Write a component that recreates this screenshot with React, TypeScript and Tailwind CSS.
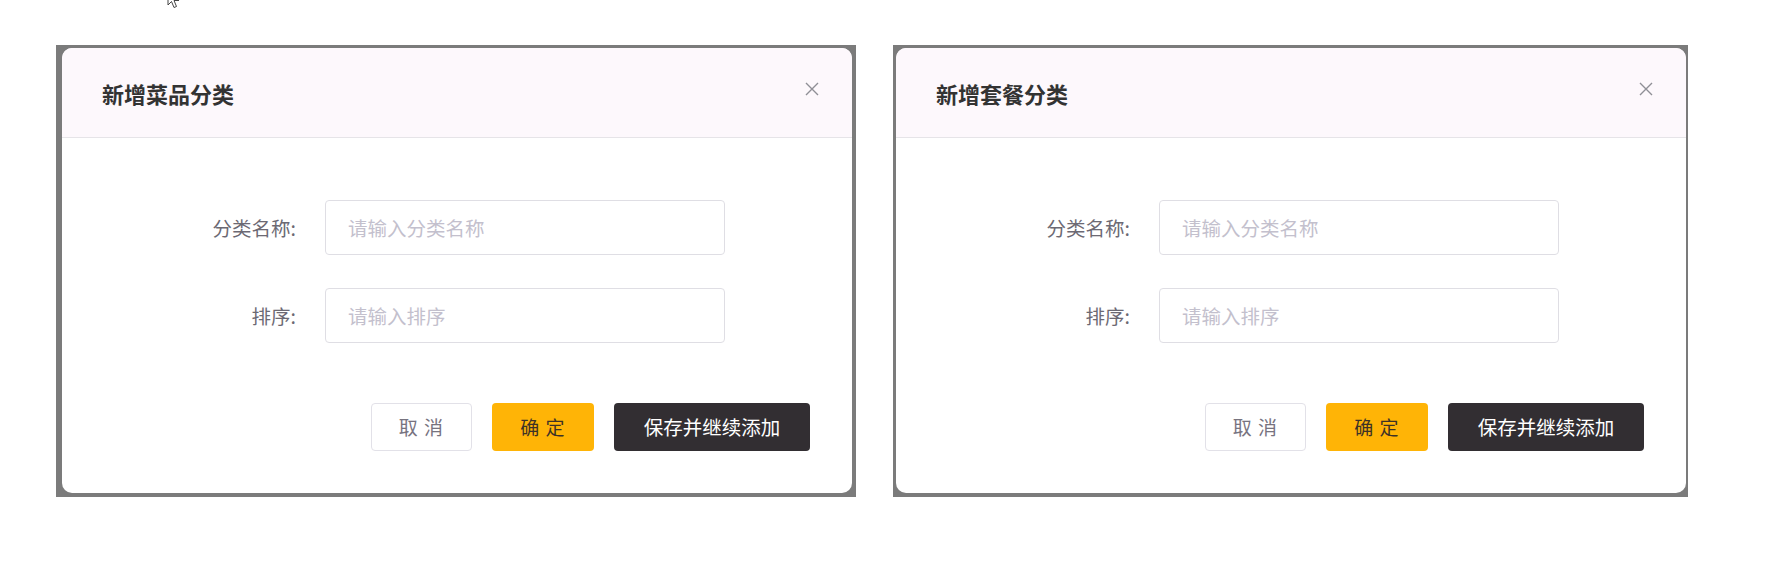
import React from 'react'

type DialogProps = {
  title: string
  frame: string
}

function CategoryDialog({ title, frame }: DialogProps) {
  return (
    <div className={`bg-[#7b7b7b] pt-[3px] pb-[4px] ${frame}`}>
      <div className="w-[790px] h-[445px] bg-white rounded-[10px] overflow-hidden flex flex-col">
        {/* header */}
        <div className="h-[90px] shrink-0 bg-[#fdf8fc] border-b border-[#e6e4e8] flex items-center justify-between pl-[40px] pr-[33px]">
          <h2 className="text-[22px] font-bold text-[#333333] leading-none mt-[1px]">{title}</h2>
          <button className="w-[14px] h-[14px] -mt-[8px] text-[#8f8f96]">
            <svg viewBox="0 0 14 14" width="14" height="14" fill="none" stroke="currentColor" strokeWidth="1.4">
              <path d="M1 1 L13 13 M13 1 L1 13" />
            </svg>
          </button>
        </div>

        {/* form */}
        <div className="pt-[62px] flex flex-col gap-[33px]">
          <div className="flex items-center">
            <label className="w-[263px] pr-[29px] text-right text-[19.5px] text-[#6c6973]">分类名称:</label>
            <input
              className="w-[400px] h-[55px] px-[22px] border border-[#dfdee4] rounded-[4px] text-[19.5px] text-[#333] outline-none placeholder:text-[#c3c0cd]"
              placeholder="请输入分类名称"
            />
          </div>
          <div className="flex items-center">
            <label className="w-[263px] pr-[29px] text-right text-[19.5px] text-[#6c6973]">排序:</label>
            <input
              className="w-[400px] h-[55px] px-[22px] border border-[#dfdee4] rounded-[4px] text-[19.5px] text-[#333] outline-none placeholder:text-[#c3c0cd]"
              placeholder="请输入排序"
            />
          </div>
        </div>

        {/* footer */}
        <div className="mt-[60px] flex justify-end gap-[20px] pr-[42px]">
          <button className="w-[101px] h-[48px] border border-[#e2e1e8] rounded-[4px] bg-white text-[19px] tracking-[1px] text-[#77737f]">
            取 消
          </button>
          <button className="w-[102px] h-[48px] rounded-[4px] bg-[#ffb406] text-[19px] tracking-[1px] text-[#3d3226]">
            确 定
          </button>
          <button className="w-[196px] h-[48px] rounded-[4px] bg-[#322e32] text-[19.5px] text-white">
            保存并继续添加
          </button>
        </div>
      </div>
    </div>
  )
}

export default function App() {
  return (
    <div className="relative min-h-screen bg-white font-['Noto_Sans_CJK_SC','Noto_Sans',sans-serif]">
      {/* mouse cursor cut off at the top edge */}
      <svg className="absolute left-[167px] -top-[10px]" width="16" height="20" viewBox="0 0 16 20">
        <path d="M1 1 L1 15 L4.5 11.5 L7 17.5 L9.5 16.5 L7 10.5 L12 10.5 Z" fill="white" stroke="#444" strokeWidth="1" />
      </svg>

      <div className="flex items-start pt-[45px] pl-[56px] gap-[37px]">
        <CategoryDialog title="新增菜品分类" frame="pl-[6px] pr-[4px]" />
        <CategoryDialog title="新增套餐分类" frame="pl-[3px] pr-[2px]" />
      </div>
    </div>
  )
}
